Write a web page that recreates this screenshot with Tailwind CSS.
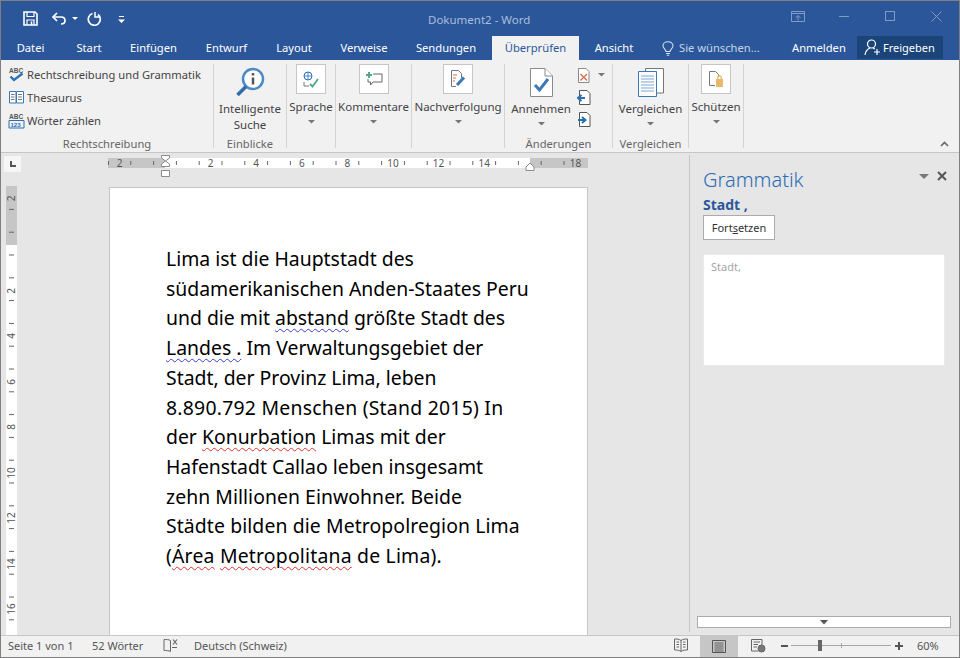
<!DOCTYPE html>
<html lang="de">
<head>
<meta charset="UTF-8">
<script src="https://cdn.jsdelivr.net/npm/@tailwindcss/browser@4"></script>
<title>Dokument2 - Word</title>
</head>
<body class="m-0 bg-[#e6e6e6]">
<div class="w-[960px] h-[658px] flex flex-col overflow-hidden border border-[#7f7f7f] font-['Noto_Sans',sans-serif] text-[#444444] text-[11.5px]">

  <!-- title bar -->
  <div class="h-[35px] shrink-0 bg-[#2b579a] flex items-center relative">
    <svg class="ml-[22px]" width="15" height="15" viewBox="0 0 15 15" fill="none" stroke="#fff" stroke-width="1.6"><path d="M1 1H12L14 3V14H1Z"/><path d="M4 1V5.500H11V1" stroke-width="1.2"/><path d="M4 14V9H11V14" stroke-width="1.2"/><path d="M8.500 10.500V14" stroke-width="1.5"/></svg>
    <svg class="ml-[13px]" width="16" height="14" viewBox="0 0 16 14" fill="none" stroke="#fff" stroke-width="1.7"><path d="M6 1L2 5L6 9"/><path d="M2 5H10C13 5 14 7 14 8.500C14 10.500 13 12 10 12"/></svg>
    <svg class="ml-[5px]" width="6" height="4" viewBox="0 0 6 4" fill="#fff"><path d="M0 0H6L3 3Z"/></svg>
    <svg class="ml-[9px]" width="15" height="15" viewBox="0 0 15 15" fill="none" stroke="#fff" stroke-width="1.7"><path d="M5.500 2.500A6 6 0 1 0 11 3.500"/><path d="M8 1V6H13" stroke-width="1.5"/></svg>
    <svg class="ml-[16px] mt-[2px]" width="7" height="8" viewBox="0 0 7 8" fill="#fff"><path d="M1 0H6V1H1Z"/><path d="M0 3.500H7L3.500 7Z"/></svg>
    <div class="absolute left-[427px] top-[10px] text-[11.5px] text-[#a9bdda] leading-[18px]">Dokument2 - Word</div>
    <svg class="absolute left-[790px] top-[10px]" width="14" height="11" viewBox="0 0 14 11" fill="none" stroke="#7f9cc6"><path d="M.5.500H13.500V10.500H.5Z"/><path d="M.5 2.500H13.500"/><path d="M7 9.500V4.500M4.500 7L7 4.500L9.500 7"/></svg>
    <div class="absolute left-[838px] top-[15px] w-[10px] h-[1px] bg-[#7f9cc6]"></div>
    <div class="absolute left-[884px] top-[10px] w-[10px] h-[10px] border border-[#7f9cc6]"></div>
    <svg class="absolute left-[930px] top-[10px]" width="11" height="11" viewBox="0 0 11 11" stroke="#7f9cc6"><path d="M.5.500L10.500 10.500M10.500.500L.5 10.500"/></svg>
  </div>

  <!-- tabs -->
  <div class="h-[24px] shrink-0 bg-[#2b579a] flex text-white text-[11.2px] leading-[24px] relative">
    <div class="w-[59px] text-center">Datei</div>
    <div class="w-[58px] text-center">Start</div>
    <div class="w-[71px] text-center">Einfügen</div>
    <div class="w-[75px] text-center">Entwurf</div>
    <div class="w-[60px] text-center">Layout</div>
    <div class="w-[80px] text-center">Verweise</div>
    <div class="w-[84px] text-center">Sendungen</div>
    <div class="ml-[4px] w-[87px] text-center bg-[#f1f1f1] text-[#2b579a]">Überprüfen</div>
    <div class="w-[70px] text-center">Ansicht</div>
    <svg class="ml-[13px] mt-[5px]" width="12" height="15" viewBox="0 0 12 15" fill="none" stroke="#d5dfee" stroke-width="1.1"><path d="M4 10.500C4 8.500 1 7.500 1 4.700C1 2.500 3.200 .7 6 .7C8.800 .7 11 2.500 11 4.700C11 7.500 8 8.500 8 10.500Z"/><path d="M4 12.500H8M4.800 14.300H7.200"/></svg>
    <div class="ml-[5px] text-[#c6d4e8]">Sie wünschen...</div>
    <div class="absolute left-[791px] top-0">Anmelden</div>
    <div class="absolute left-[856px] top-0 w-[86px] h-[23px] bg-[#1b4478] flex items-center leading-[23px]">
      <svg class="ml-[7px]" width="17" height="17" viewBox="0 0 17 17" fill="none" stroke="#fff" stroke-width="1.2"><circle cx="7.500" cy="5" r="4"/><path d="M1 16C1.500 12 3.500 10 6 9"/><path d="M9 9C9.800 9.300 10.300 9.700 10.800 10.200"/><path d="M13 10V16M10 13H16"/></svg>
      <span class="ml-[2px] text-[11px]">Freigeben</span>
    </div>
  </div>

  <!-- ribbon -->
  <div class="h-[93px] shrink-0 bg-[#f1f1f1] border-b border-[#c6c6c6] pt-[4px] flex relative">

    <div class="w-[213px] h-[84px] border-r border-[#d4d4d4] flex flex-col">
      <div class="flex-1 mt-[-1px] pl-[7px] whitespace-nowrap text-[11.2px]">
        <div class="flex items-center h-[23px]">
          <svg width="17" height="17" viewBox="0 0 17 17" fill="none"><text x="1" y="6.500" font-size="6.5" font-weight="700" fill="#555" font-family="Liberation Sans">ABC</text><path d="M2.500 10.500L6 14L14.500 7.500" stroke="#2b6fb5" stroke-width="2.4"/></svg>
          <span class="ml-[2px] leading-[23px]">Rechtschreibung und Grammatik</span>
        </div>
        <div class="flex items-center h-[23px]">
          <svg width="17" height="13" viewBox="0 0 17 13" fill="#fff" stroke="#3b78b8"><path d="M1.500.5H8V12H1.500Z"/><path d="M8.500.5H15.500V12H8.500Z"/><path d="M3 3.500H6.500M3 6H6.500M3 8.500H6.500M10 3.500H14M10 6H14M10 8.500H14" stroke="#777"/></svg>
          <span class="ml-[2px] leading-[23px]">Thesaurus</span>
        </div>
        <div class="flex items-center h-[23px]">
          <svg width="17" height="17" viewBox="0 0 17 17" fill="none"><text x="1" y="6.500" font-size="6.5" font-weight="700" fill="#555" font-family="Liberation Sans">ABC</text><path d="M1 8.500H16V16H1Z" stroke="#2b6fb5"/><text x="2.500" y="14.700" font-size="6" font-weight="700" fill="#2b6fb5" font-family="Liberation Sans">123</text></svg>
          <span class="ml-[2px] leading-[23px]">Wörter zählen</span>
        </div>
      </div>
      <div class="text-center text-[11.2px] text-[#666666] leading-[16px] h-[16px] mb-[-4px]">Rechtschreibung</div>
    </div>

    <div class="w-[73px] h-[84px] border-r border-[#d4d4d4] flex flex-col items-center">
      <svg class="mt-[3px] shrink-0" width="30" height="30" viewBox="0 0 30 30" fill="none"><circle cx="18" cy="12" r="10" fill="#fff" stroke="#4a8ac6" stroke-width="2.5"/><path d="M11 19.500L2.500 28" stroke="#2f6db0" stroke-width="3.5"/><path d="M18 10.500V17.500" stroke="#555" stroke-width="2.5"/><path d="M18 6V8.500" stroke="#555" stroke-width="2.5"/></svg>
      <div class="mt-[4px] text-center leading-[16px] flex-1">Intelligente<br>Suche</div>
      <div class="text-[11.2px] text-[#666666] leading-[16px] h-[16px] mb-[-4px]">Einblicke</div>
    </div>

    <div class="w-[49px] h-[84px] border-r border-[#d4d4d4] flex flex-col items-center">
      <div class="w-[30px] h-[30px] shrink-0 bg-white border border-[#c6c6c6] flex items-center justify-center">
        <svg width="18" height="17" viewBox="0 0 18 17" fill="none"><circle cx="6" cy="5" r="4" stroke="#2b6fb5"/><path d="M2 5H10M6 1V9" stroke="#2b6fb5" stroke-width=".8"/><path d="M8 13L10.500 15.500L16 8" stroke="#4fa88a" stroke-width="1.8"/><path d="M2 11V15H7" stroke="#777"/></svg>
      </div>
      <div class="mt-[5px] leading-[16px] whitespace-nowrap">Sprache</div>
      <svg class="mt-[5px]" width="7" height="4" viewBox="0 0 7 4" fill="#777"><path d="M0 0H7L3.500 3.500Z"/></svg>
    </div>

    <div class="w-[76px] h-[84px] border-r border-[#d4d4d4] flex flex-col items-center">
      <div class="w-[30px] h-[30px] shrink-0 bg-white border border-[#c6c6c6] flex items-center justify-center">
        <svg width="18" height="16" viewBox="0 0 18 16" fill="none"><path d="M8 3H17V11H8L5.500 14V11H3V8" stroke="#666"/><path d="M4 1V7M1 4H7" stroke="#4fa88a" stroke-width="2"/></svg>
      </div>
      <div class="mt-[5px] leading-[16px] whitespace-nowrap">Kommentare</div>
      <svg class="mt-[5px]" width="7" height="4" viewBox="0 0 7 4" fill="#777"><path d="M0 0H7L3.500 3.500Z"/></svg>
    </div>

    <div class="w-[93px] h-[84px] border-r border-[#d4d4d4] flex flex-col items-center">
      <div class="w-[30px] h-[30px] shrink-0 bg-white border border-[#c6c6c6] flex items-center justify-center">
        <svg width="16" height="18" viewBox="0 0 16 18" fill="none"><path d="M1.500.5H8.500L11.500 3.500V8M1.500.5V16.500H6" stroke="#777"/><path d="M3 5H7M3 8H6M3 11H5" stroke="#d9694a"/><path d="M7 15L14 7.500" stroke="#3b78b8" stroke-width="3"/></svg>
      </div>
      <div class="mt-[5px] leading-[16px] whitespace-nowrap">Nachverfolgung</div>
      <svg class="mt-[5px]" width="7" height="4" viewBox="0 0 7 4" fill="#777"><path d="M0 0H7L3.500 3.500Z"/></svg>
    </div>

    <div class="w-[108px] h-[84px] border-r border-[#d4d4d4] flex flex-col">
      <div class="flex-1 flex">
        <div class="w-[72px] flex flex-col items-center">
          <svg class="mt-[4px] shrink-0" width="23" height="29" viewBox="0 0 23 29" fill="#fff"><path d="M.5.5H15L22.500 8V28.500H.5Z" stroke="#8a8a8a"/><path d="M15 .5V8H22.500" stroke="#8a8a8a"/><path d="M5 17L9.500 22L18 11" fill="none" stroke="#3b78b8" stroke-width="3"/></svg>
          <div class="mt-[4px] leading-[16px]">Annehmen</div>
          <svg class="mt-[5px]" width="7" height="4" viewBox="0 0 7 4" fill="#777"><path d="M0 0H7L3.500 3.500Z"/></svg>
        </div>
        <div class="flex flex-col pt-[4px]">
          <div class="flex items-start h-[22px]">
            <svg width="13" height="15" viewBox="0 0 13 15" fill="#fff"><path d="M1.500.5H9L12 3.500V14.500H1.500Z" stroke="#8a8a8a"/><path d="M3.500 6L10 12.500M10 6L3.500 12.500" stroke="#d9694a" stroke-width="1.3"/></svg>
            <svg class="ml-[8px] mt-[5px]" width="7" height="4" viewBox="0 0 7 4" fill="#777"><path d="M0 0H7L3.500 3.500Z"/></svg>
          </div>
          <svg class="mb-[7px]" width="14" height="15" viewBox="0 0 14 15" fill="#fff"><path d="M2.500.5H10L13 3.500V14.500H2.500Z" stroke="#555"/><path d="M8 8H2M4.500 5L1 8L4.500 11" fill="none" stroke="#2b6fb5" stroke-width="2"/></svg>
          <svg width="14" height="15" viewBox="0 0 14 15" fill="#fff"><path d="M2.500.5H10L13 3.500V14.500H2.500Z" stroke="#555"/><path d="M1 8H7M5 5L8.500 8L5 11" fill="none" stroke="#2b6fb5" stroke-width="2"/></svg>
        </div>
      </div>
      <div class="text-center text-[11.2px] text-[#666666] leading-[16px] h-[16px] mb-[-4px]">Änderungen</div>
    </div>

    <div class="w-[76px] h-[84px] border-r border-[#d4d4d4] flex flex-col items-center">
      <svg class="mt-[4px] shrink-0" width="26" height="29" viewBox="0 0 26 29" fill="#fff"><path d="M7.500.5H25.500V25H7.500Z" stroke="#777"/><path d="M.5 3.500H18.500V28.500H.5Z" fill="#fdfdfd" stroke="#3b78b8"/><path d="M3 8H16M3 11H16M3 14H16M3 17H16M3 20H16M3 23H16" stroke="#7aa7d6"/></svg>
      <div class="mt-[4px] leading-[16px]">Vergleichen</div>
      <svg class="mt-[5px]" width="7" height="4" viewBox="0 0 7 4" fill="#777"><path d="M0 0H7L3.500 3.500Z"/></svg>
      <div class="mt-auto text-[11.2px] text-[#666666] leading-[16px] h-[16px] mb-[-4px]">Vergleichen</div>
    </div>

    <div class="w-[55px] h-[84px] border-r border-[#d4d4d4] flex flex-col items-center">
      <div class="w-[30px] h-[30px] shrink-0 bg-white border border-[#c6c6c6] flex items-center justify-center">
        <svg width="15" height="17" viewBox="0 0 15 17" fill="none"><path d="M6 14.500H.5V.5H6.500L9.500 3.500V6" stroke="#777"/><path d="M7 8H14V16H7Z" fill="#e8b96a"/><path d="M8.800 8V6.500C8.800 4.500 12.200 4.500 12.200 6.500V8" stroke="#e8b96a" stroke-width="1.3"/></svg>
      </div>
      <div class="mt-[5px] leading-[16px]">Schützen</div>
      <svg class="mt-[5px]" width="7" height="4" viewBox="0 0 7 4" fill="#777"><path d="M0 0H7L3.500 3.500Z"/></svg>
    </div>

    <svg class="absolute left-[939px] top-[81px]" width="9" height="6" viewBox="0 0 9 6" fill="none" stroke="#666" stroke-width="1.6"><path d="M1 5L4.500 1.500L8 5"/></svg>
  </div>

  <!-- document area and side pane -->
  <div class="h-[482px] shrink-0 flex bg-[#e6e6e6]">
    <div class="w-[688px] shrink-0">
      <div class="flex h-[33px]">
        <div class="ml-[3px] mt-[3px] w-[17px] h-[16px] bg-[#f6f6f6] flex items-center justify-center">
          <div class="w-[6px] h-[6px] border-l-2 border-b-2 border-[#555555]"></div>
        </div>
        <svg class="ml-[87px] mt-[2px]" width="480" height="23" viewBox="0 0 480 23" font-family="Noto Sans" font-size="10" fill="#555" text-anchor="middle">
          <path d="M0 3H57V13H0ZM422 3H480V13H422Z" fill="#c6c6c6"/>
          <path d="M57 3H422V13H57Z" fill="#fff"/>
          <path d="M.5 6V10M22.800 6V10M45.600 6V10M68.400 6V10M91.200 6V10M114 6V10M136.800 6V10M159.600 6V10M182.400 6V10M205.200 6V10M228 6V10M250.800 6V10M273.600 6V10M296.400 6V10M319.200 6V10M342 6V10M364.800 6V10M387.600 6V10M410.400 6V10M433.200 6V10M456 6V10" stroke="#666"/>
          <text x="11.500" y="11.500">2</text><text x="102.600" y="11.500">2</text><text x="148.200" y="11.500">4</text><text x="193.800" y="11.500">6</text><text x="239.400" y="11.500">8</text><text x="285" y="11.500">10</text><text x="330.600" y="11.500">12</text><text x="376.200" y="11.500">14</text><text x="467.400" y="11.500">18</text>
          <path d="M53.500.5H61.500V3L57.500 6L61.500 9V11.500H53.500V9L57.500 6L53.500 3Z" fill="#fff" stroke="#8a8a8a"/>
          <path d="M53.500 15.500H61.500V21.500H53.500Z" fill="#fff" stroke="#8a8a8a"/>
          <path d="M418 15.500V12L422 8L426 12V15.500Z" fill="#fff" stroke="#8a8a8a"/>
        </svg>
      </div>
      <div class="flex h-[449px]">
        <svg class="ml-[5px] shrink-0 overflow-visible" width="12" height="449" viewBox="0 0 12 449" font-family="Noto Sans" font-size="10" fill="#555" text-anchor="middle">
          <path d="M0 0H11V59H0Z" fill="#c6c6c6"/>
          <path d="M0 59H11V449H0Z" fill="#fff"/>
          <path d="M3 23.400H8M3 46.200H8M3 69H8M3 91.800H8M3 114.600H8M3 137.400H8M3 160.200H8M3 183H8M3 205.800H8M3 228.600H8M3 251.400H8M3 274.200H8M3 297H8M3 319.800H8M3 342.600H8M3 365.400H8M3 388.200H8M3 411H8M3 433.800H8" stroke="#666"/>
          <text transform="translate(9 12.500) rotate(-90)">2</text>
          <text transform="translate(9 105) rotate(-90)">2</text>
          <text transform="translate(9 150) rotate(-90)">4</text>
          <text transform="translate(9 196) rotate(-90)">6</text>
          <text transform="translate(9 241) rotate(-90)">8</text>
          <text transform="translate(9 287) rotate(-90)">10</text>
          <text transform="translate(9 332) rotate(-90)">12</text>
          <text transform="translate(9 378) rotate(-90)">14</text>
          <text transform="translate(9 423) rotate(-90)">16</text>
        </svg>
        <div class="ml-[91px] mt-[1px] w-[479px] h-[448px] bg-white border border-[#c6c6c6] border-b-0 pt-[56px] pl-[56px] text-black text-[19.4px] leading-[29.7px] whitespace-nowrap font-['Noto_Sans',sans-serif]">
          <div>Lima ist die Hauptstadt des</div>
          <div>südamerikanischen Anden-Staates Peru</div>
          <div>und die mit <span class="underline decoration-wavy decoration-[#3b3bd0] decoration-1 underline-offset-[3px]">abstand</span> größte Stadt des</div>
          <div><span class="underline decoration-wavy decoration-[#3b3bd0] decoration-1 underline-offset-[3px]">Landes .</span> Im Verwaltungsgebiet der</div>
          <div>Stadt, der Provinz Lima, leben</div>
          <div class="tracking-[0.24px]">8.890.792 Menschen (Stand 2015) In</div>
          <div>der <span class="underline decoration-wavy decoration-[#e03030] decoration-1 underline-offset-[3px]">Konurbation</span> Limas mit der</div>
          <div>Hafenstadt Callao leben insgesamt</div>
          <div class="tracking-[0.05px]">zehn Millionen Einwohner. Beide</div>
          <div class="tracking-[0.1px]">Städte bilden die Metropolregion Lima</div>
          <div class="tracking-[0.2px]">(<span class="underline decoration-wavy decoration-[#e03030] decoration-1 underline-offset-[3px]">Área</span> <span class="underline decoration-wavy decoration-[#e03030] decoration-1 underline-offset-[3px]">Metropolitana</span> de Lima).</div>
        </div>
      </div>
    </div>

    <div class="flex-1 mt-[2px] mb-[3px] border-l border-[#c6c6c6] relative">
      <div class="pl-[13px] pt-[13px] w-[256px]">
        <div class="text-[20px] leading-[24px] text-[#2b6cb5] font-light">Grammatik</div>
        <div class="text-[14px] leading-[21px] font-bold text-[#2b579a] mt-[2px]">Stadt ,</div>
        <div class="w-[72px] h-[25px] bg-white border border-[#ababab] text-center text-[11px] leading-[23px] text-[#333333]">Fort<span class="underline">s</span>etzen</div>
        <div class="mt-[14px] w-[242px] h-[112px] bg-white border border-[#ebebeb] pl-[7px] pt-[4px] text-[#a6a6a6] text-[11px] leading-[16px]">Stadt,</div>
      </div>
      <svg class="absolute left-[229px] top-[19px]" width="10" height="5" viewBox="0 0 10 5" fill="#777"><path d="M0 0H10L5 5Z"/></svg>
      <svg class="absolute left-[247px] top-[16px]" width="10" height="10" viewBox="0 0 10 10" stroke="#555" stroke-width="2"><path d="M1 1L9 9M9 1L1 9"/></svg>
      <div class="absolute left-[7px] top-[461px] w-[254px] h-[12px] bg-white border border-[#ababab] flex items-center justify-center">
        <svg width="8" height="5" viewBox="0 0 8 5" fill="#555"><path d="M0 0H8L4 4.500Z"/></svg>
      </div>
    </div>
  </div>

  <!-- status bar -->
  <div class="flex-1 bg-[#f1f1f1] border-t border-[#c6c6c6] pb-[2px] flex items-center relative text-[11px] text-[#555555] leading-[20px]">
    <span class="ml-[7px]">Seite 1 von 1</span>
    <span class="absolute left-[91px]">52 Wörter</span>
    <svg class="absolute left-[162px] top-[2px]" width="15" height="15" viewBox="0 0 15 15" fill="none" stroke="#666"><path d="M7.500 2.500C6 1.500 3 1.500 1 1.500V12.500C3 12.500 6 12.500 7.500 13.500V2.500"/><path d="M10 1.500L14 6.500M14 1.500L10 6.500M9 9.500H14" stroke-width="1.2"/></svg>
    <span class="absolute left-[193px]">Deutsch (Schweiz)</span>
    <svg class="absolute left-[673px] top-[2px]" width="14" height="15" viewBox="0 0 14 15" fill="none" stroke="#666"><path d="M7 2.500C5 1 3 1 .5 1V12C3 12 5 12 7 13.500C9 12 11 12 13.500 12V1C11 1 9 1 7 2.500V13.500"/><path d="M2.500 4H5M2.500 6.500H5M2.500 9H5M9 4H11.500M9 6.500H11.500M9 9H11.500"/></svg>
    <div class="absolute left-[699px] top-0 w-[38px] h-[21px] bg-[#c6c6c6] flex items-center justify-center">
      <svg width="14" height="13" viewBox="0 0 14 13" fill="none" stroke="#555"><path d="M.5.500H13.500V12.500H.5Z"/><path d="M2.500 3H11.500M2.500 5H11.500M2.500 7H11.500M2.500 9H11.500M2.500 11H11.500" stroke-width=".9"/></svg>
    </div>
    <svg class="absolute left-[749px] top-[2px]" width="16" height="15" viewBox="0 0 16 15" fill="none" stroke="#666"><path d="M8 13H1.500V1.500H12V7"/><path d="M3.500 4H10M3.500 6.500H8M3.500 9H7"/><circle cx="11.500" cy="10.500" r="3.500" fill="#777"/></svg>
    <div class="absolute left-[780px] top-[9px] w-[7px] h-[2px] bg-[#555555]"></div>
    <div class="absolute left-[790px] top-[9px] w-[100px] h-[1px] bg-[#a6a6a6]"></div>
    <div class="absolute left-[840px] top-[7px] w-[1px] h-[5px] bg-[#a6a6a6]"></div>
    <div class="absolute left-[817px] top-[4px] w-[4px] h-[11px] bg-[#666666]"></div>
    <svg class="absolute left-[894px] top-[6px]" width="8" height="8" viewBox="0 0 8 8" stroke="#555" stroke-width="2"><path d="M0 4H8M4 0V8"/></svg>
    <span class="absolute left-[916px]">60%</span>
  </div>
</div>
</body>
</html>
